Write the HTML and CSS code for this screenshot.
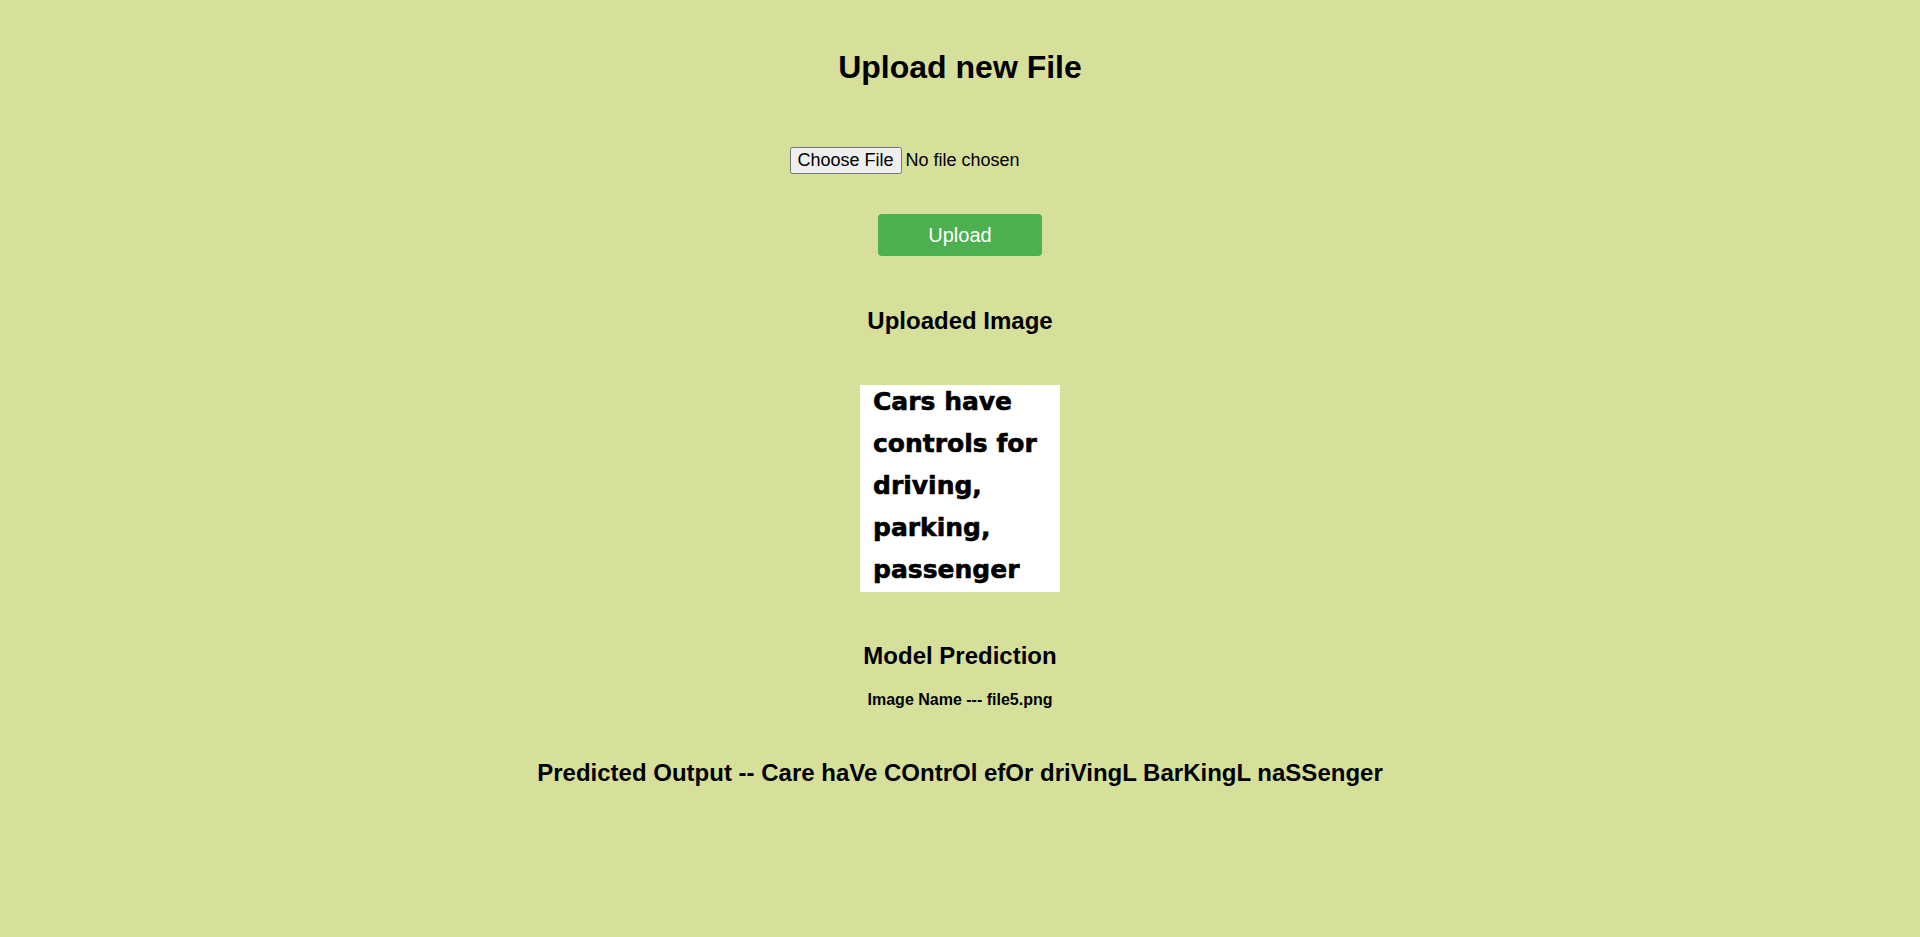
FILE: index.html
```html
<!DOCTYPE html>
<html lang="en">
<head>
<meta charset="utf-8">
<title>Upload new File</title>
<link rel="stylesheet" href="styles.css">
</head>
<body>
<main class="page">
  <h1 class="title">Upload new File</h1>
  <form class="upload-form">
    <div class="file-row">
      <input class="file-input" type="file" name="file">
    </div>
    <button class="upload-btn" type="button">Upload</button>
  </form>
  <h2 class="section-title uploaded-title">Uploaded Image</h2>
  <div class="preview">
    <p class="preview-text">Cars have controls for driving, parking, passenger</p>
  </div>
  <h2 class="section-title model-title">Model Prediction</h2>
  <h4 class="image-name">Image Name --- file5.png</h4>
  <h2 class="section-title output-title">Predicted Output -- Care haVe COntrOl efOr driVingL BarKingL naSSenger</h2>
</main>
</body>
</html>
```

FILE: styles.css
```css
html, body {
  margin: 0;
  padding: 0;
}

body {
  background: #d7e09b;
  color: #000;
  font-family: "Liberation Sans", Arial, sans-serif;
  min-height: 937px;
}

.page {
  display: flex;
  flex-direction: column;
  align-items: center;
  text-align: center;
  padding-top: 49px;
}

.title {
  margin: 0;
  font-size: 32px;
  line-height: 37px;
  font-weight: bold;
}

.upload-form {
  display: flex;
  flex-direction: column;
  align-items: center;
}

.file-row {
  margin-top: 61px;
  display: flex;
  justify-content: center;
}

.file-input {
  font-family: "Liberation Sans", Arial, sans-serif;
  font-size: 18px;
  color: #000;
}

.file-input::file-selector-button {
  font-family: "Liberation Sans", Arial, sans-serif;
  font-size: 18px;
}

.upload-btn {
  margin-top: 40px;
  background: #4caf50;
  color: #fff;
  border: none;
  border-radius: 4px;
  font-family: "Liberation Sans", Arial, sans-serif;
  font-size: 20px;
  line-height: 22px;
  padding: 10px 50px;
  cursor: pointer;
}

.section-title {
  margin: 0;
  font-size: 24px;
  line-height: 28px;
  font-weight: bold;
}

.uploaded-title {
  margin-top: 51px;
}

.preview {
  margin-top: 50px;
  width: 200px;
  height: 207px;
  background: #fff;
  overflow: hidden;
  text-align: left;
}

.preview-text {
  margin: -4px 0 0 0;
  padding-left: 13px;
  padding-right: 4px;
  font-family: "DejaVu Sans", sans-serif;
  font-weight: bold;
  font-size: 25px;
  line-height: 42px;
  -webkit-text-stroke: 0.6px #000;
}

.model-title {
  margin-top: 50px;
}

.image-name {
  margin: 20px 0 0 0;
  font-size: 16px;
  line-height: 19px;
  font-weight: bold;
}

.output-title {
  margin-top: 50px;
}
```
